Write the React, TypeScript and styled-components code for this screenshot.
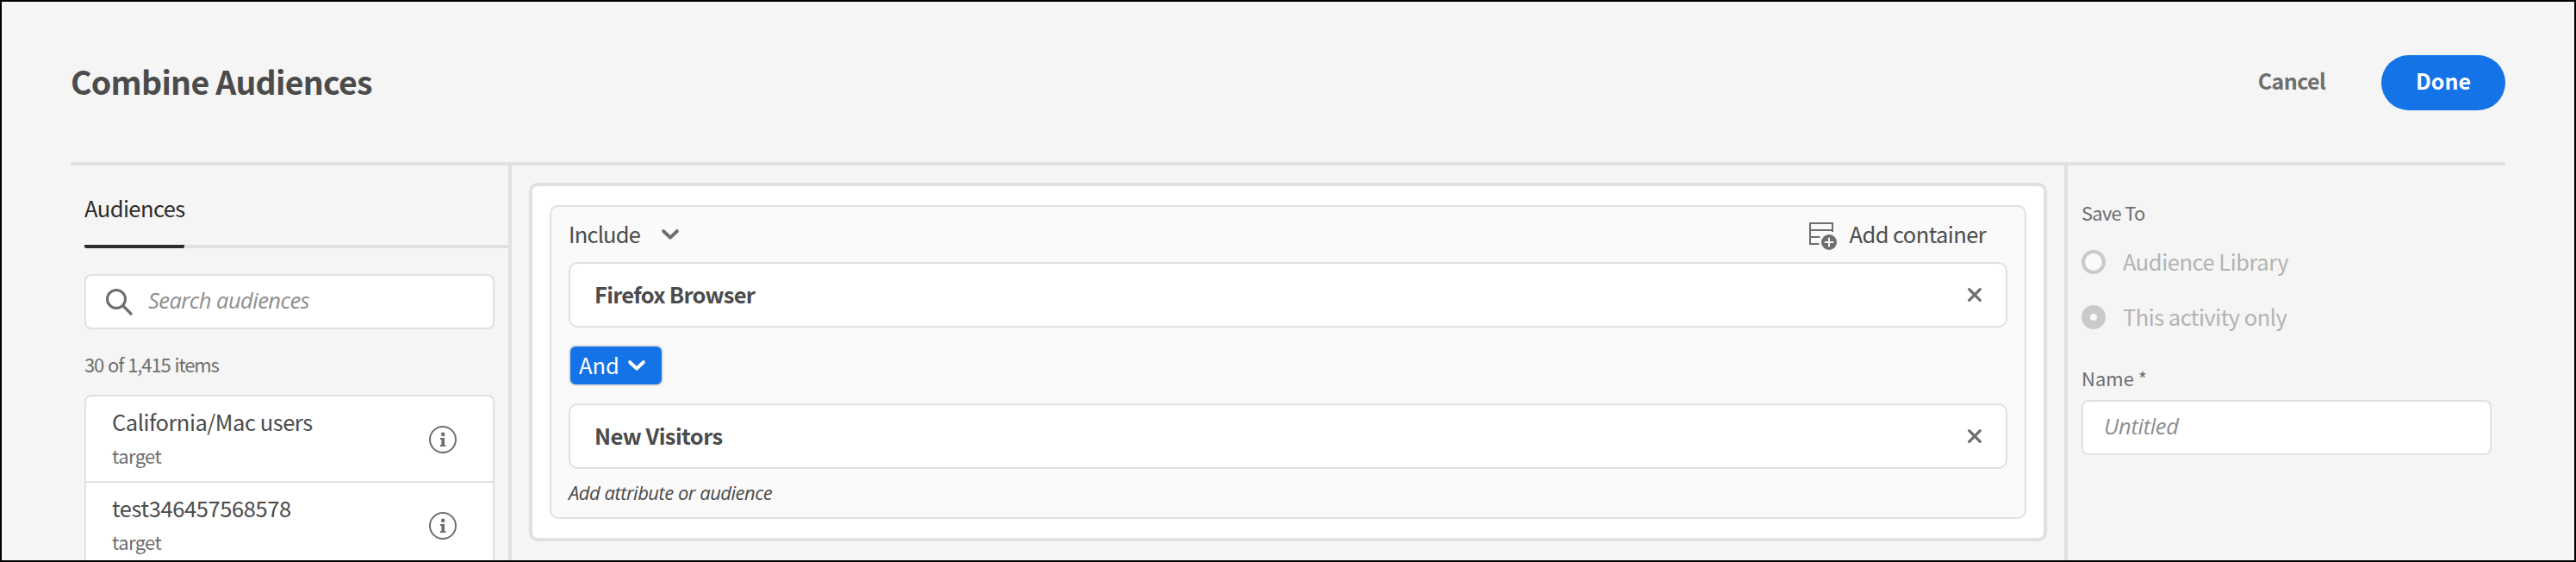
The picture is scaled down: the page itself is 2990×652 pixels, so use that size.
import React from "react";
import styled, { createGlobalStyle } from "styled-components";

const GlobalStyle = createGlobalStyle`
  *, *::before, *::after { box-sizing: border-box; }
  body { margin: 0; font-family: "Noto Sans CJK SC", "Open Sans", sans-serif; color: #4b4b4b; }
  button { font: inherit; border: 0; margin: 0; padding: 0; background: none; }
  svg { display: block; flex: none; }
`;

interface TextProps {
  $size?: number;
  $tracking?: number;
  $weight?: number;
  $color?: string;
}

const Text = styled.span<TextProps>`
  display: block;
  white-space: nowrap;
  font-size: ${(p) => p.$size ?? 25.5}px;
  letter-spacing: ${(p) => p.$tracking ?? 0}px;
  font-weight: ${(p) => p.$weight ?? 400};
  color: ${(p) => p.$color ?? "#4b4b4b"};
`;

const InlineText = styled(Text)`
  line-height: 34px;
  padding-bottom: 2px;
`;

const Page = styled.div`
  display: flex;
  flex-direction: column;
  width: 2990px;
  height: 652px;
  padding: 0 80px;
  border: 2px solid #000;
  background: #f5f5f5;
  overflow: hidden;
`;

const Header = styled.header`
  display: flex;
  flex: none;
  justify-content: space-between;
  align-items: flex-start;
  height: 190px;
  padding-top: 62px;
  border-bottom: 4px solid #e1e1e1;
`;

const Title = styled(Text).attrs({ as: "h1" })`
  margin: 0;
  line-height: 60px;
`;

const Actions = styled.div`
  display: flex;
  gap: 64px;
`;

const ActionButton = styled.button<{ $primary?: boolean }>`
  display: flex;
  align-items: center;
  justify-content: center;
  width: ${(p) => (p.$primary ? "144px" : "80px")};
  height: 64px;
  padding-bottom: 4px;
  border-radius: 32px;
  background: ${(p) => (p.$primary ? "#1473e6" : "transparent")};
`;

const Body = styled.div`
  display: grid;
  grid-template-columns: 512px 1fr 512px;
  flex: 1;
  min-height: 0;
`;

const Library = styled.aside`
  min-height: 0;
  padding-left: 16px;
  border-right: 4px solid #e1e1e1;
`;

const TabBar = styled.div`
  display: flex;
  height: 96px;
  border-bottom: 4px solid #e1e1e1;
`;

const Tab = styled.div`
  width: 116px;
  height: 96px;
  padding-top: 29px;
  line-height: 40px;
  border-bottom: 4px solid #2c2c2c;
  border-radius: 2px;
`;

const Field = styled.div<{ $inset: number }>`
  display: flex;
  align-items: center;
  gap: 18px;
  width: 476px;
  height: 64px;
  padding-left: ${(p) => p.$inset}px;
  border: 2px solid #e1e1e1;
  border-radius: 8px;
  background: #fff;
`;

const SearchField = styled(Field)`
  margin-top: 30px;
`;

const Placeholder = styled(Text)`
  padding-bottom: 4px;
  font-family: "Open Sans", sans-serif;
  font-style: italic;
`;

const Count = styled(Text)`
  margin: 25px 0 21px;
  line-height: 30px;
  word-spacing: 1px;
`;

const List = styled.ul`
  width: 476px;
  margin: 0;
  padding: 0;
  list-style: none;
  border: 2px solid #e1e1e1;
  border-radius: 8px;
  background: #fff;
`;

const Item = styled.li`
  display: flex;
  justify-content: space-between;
  height: 100px;
  padding: 13px 42px 0 30px;
  border-bottom: 2px solid #e1e1e1;
`;

const ItemName = styled(Text)`
  line-height: 32px;
  margin-bottom: 9px;
`;

const ItemSource = styled(Text)`
  line-height: 28px;
`;

const InfoSlot = styled.div`
  padding-top: 21px;
`;

const Builder = styled.main`
  align-self: start;
  height: 416px;
  margin: 20px;
  padding: 22px 20px;
  border: 4px solid #e1e1e1;
  border-radius: 10px;
  background: #fff;
`;

const Container = styled.section`
  height: 364px;
  padding: 0 20px;
  border: 2px solid #e1e1e1;
  border-radius: 10px;
  background: #fafafa;
`;

const ContainerHeader = styled.div`
  display: flex;
  align-items: center;
  justify-content: space-between;
  height: 64px;
  padding: 0 25px 0 0;
`;

const ModePicker = styled.button`
  display: flex;
  align-items: center;
  gap: 24px;
`;

const AddContainer = styled.button`
  display: flex;
  align-items: center;
  gap: 15px;
`;

const AddIconSlot = styled.span`
  padding-top: 4px;
`;

const Rule = styled.div`
  display: flex;
  align-items: center;
  justify-content: space-between;
  height: 76px;
  padding: 0 26px 0 28px;
  border: 2px solid #e1e1e1;
  border-radius: 10px;
  background: #fff;
`;

const Operator = styled.button`
  display: flex;
  align-items: center;
  gap: 9px;
  width: 110px;
  height: 48px;
  margin: 20px 0;
  padding-left: 10px;
  border: 2px solid #e1e1e1;
  border-radius: 8px;
  background: #1473e6;
`;

const Hint = styled(Text)`
  font-family: "Open Sans", sans-serif;
  font-style: italic;
  line-height: 55px;
`;

const SavePanel = styled.aside`
  padding: 39px 0 0 16px;
  border-left: 4px solid #e1e1e1;
`;

const Label = styled(Text)`
  line-height: 30px;
  margin-bottom: 11px;
`;

const RadioRow = styled.div`
  display: flex;
  align-items: center;
  gap: 20px;
  height: 64px;
`;

const Radio = styled.span<{ $checked?: boolean }>`
  width: 28px;
  height: 28px;
  border: ${(p) => (p.$checked ? 10 : 4)}px solid #cacaca;
  border-radius: 50%;
  background: #fafafa;
`;

const NameGroup = styled.div`
  margin-top: 23px;
`;

const SearchIcon = () => (
  <svg width="32" height="32" viewBox="0 0 32 32" fill="none" stroke="#6e6e6e" strokeLinecap="round">
    <circle cx="13" cy="13" r="10.5" strokeWidth="3" />
    <path d="M20.7 20.7L30 30" strokeWidth="3.2" />
  </svg>
);

const InfoIcon = () => (
  <svg width="32" height="32" viewBox="0 0 32 32">
    <circle cx="16" cy="16" r="15" fill="none" stroke="#6e6e6e" strokeWidth="2" />
    <circle cx="16.2" cy="9.9" r="2.3" fill="#6e6e6e" />
    <path d="M13 14h5v8h1.2v2H13v-2h1.4v-6H13z" fill="#6e6e6e" />
  </svg>
);

const Chevron = ({ color }: { color: string }) => (
  <svg width="22" height="16" viewBox="0 0 22 16" fill="none" stroke={color} strokeWidth="4" strokeLinecap="round" strokeLinejoin="round">
    <path d="M3.2 4.2L11 11.6L18.8 4.2" />
  </svg>
);

const CloseIcon = () => (
  <svg width="20" height="20" viewBox="0 0 20 20" stroke="#6e6e6e" strokeWidth="3.2" strokeLinecap="round">
    <path d="M3.7 3.7L16.3 16.3M16.3 3.7L3.7 16.3" />
  </svg>
);

const AddContainerIcon = () => (
  <svg width="32" height="32" viewBox="0 0 32 32" fill="none" stroke="#6e6e6e" strokeWidth="2">
    <path d="M27 11V1H1V25H11.5M1 9H27M1 17H12.5" />
    <circle cx="23" cy="23" r="9" fill="#6e6e6e" stroke="none" />
    <path d="M23 17.7V28.3M17.7 23H28.3" stroke="#fafafa" />
  </svg>
);

const audiences = [
  { name: "California/Mac users", source: "target", tracking: -0.48 },
  { name: "test346457568578", source: "target", tracking: -0.4 },
];

const AudienceRule = ({ name, tracking }: { name: string; tracking: number }) => (
  <Rule>
    <InlineText $weight={700} $tracking={tracking}>{name}</InlineText>
    <CloseIcon />
  </Rule>
);

export default function App() {
  return (
    <Page>
      <GlobalStyle />
      <Header>
        <Title $size={37.5} $weight={700} $tracking={-0.73}>Combine Audiences</Title>
        <Actions>
          <ActionButton>
            <InlineText $weight={700} $size={25} $tracking={-0.6} $color="#6e6e6e">Cancel</InlineText>
          </ActionButton>
          <ActionButton $primary>
            <InlineText $weight={700} $size={25} $tracking={0} $color="#fff">Done</InlineText>
          </ActionButton>
        </Actions>
      </Header>
      <Body>
        <Library>
          <TabBar>
            <Tab>
              <Text $color="#2c2c2c" $tracking={-0.57}>Audiences</Text>
            </Tab>
          </TabBar>
          <SearchField $inset={22}>
            <SearchIcon />
            <Placeholder $tracking={-0.55} $color="#8e8e8e">Search audiences</Placeholder>
          </SearchField>
          <Count $size={22} $tracking={-1.1} $color="#6e6e6e">30 of 1,415 items</Count>
          <List>
            {audiences.map((a) => (
              <Item key={a.name}>
                <div>
                  <ItemName $tracking={a.tracking}>{a.name}</ItemName>
                  <ItemSource $size={22} $tracking={-0.6} $color="#6e6e6e">{a.source}</ItemSource>
                </div>
                <InfoSlot>
                  <InfoIcon />
                </InfoSlot>
              </Item>
            ))}
          </List>
        </Library>
        <Builder>
          <Container>
            <ContainerHeader>
              <ModePicker>
                <InlineText $tracking={-0.8}>Include</InlineText>
                <Chevron color="#6e6e6e" />
              </ModePicker>
              <AddContainer>
                <AddIconSlot>
                  <AddContainerIcon />
                </AddIconSlot>
                <InlineText $tracking={-0.6}>Add container</InlineText>
              </AddContainer>
            </ContainerHeader>
            <AudienceRule name="Firefox Browser" tracking={-0.74} />
            <Operator>
              <InlineText $tracking={0} $color="#fff">And</InlineText>
              <Chevron color="#fff" />
            </Operator>
            <AudienceRule name="New Visitors" tracking={-0.55} />
            <Hint $size={22} $tracking={-0.5}>Add attribute or audience</Hint>
          </Container>
        </Builder>
        <SavePanel>
          <Label $size={22} $tracking={-0.76} $color="#6e6e6e">Save To</Label>
          <RadioRow>
            <Radio />
            <InlineText $tracking={-0.47} $color="#b3b3b3">Audience Library</InlineText>
          </RadioRow>
          <RadioRow>
            <Radio $checked />
            <InlineText $tracking={-0.52} $color="#b3b3b3">This activity only</InlineText>
          </RadioRow>
          <NameGroup>
            <Label $size={22} $color="#6e6e6e">Name *</Label>
            <Field $inset={24}>
              <Placeholder $tracking={-0.3} $color="#8e8e8e">Untitled</Placeholder>
            </Field>
          </NameGroup>
        </SavePanel>
      </Body>
    </Page>
  );
}
